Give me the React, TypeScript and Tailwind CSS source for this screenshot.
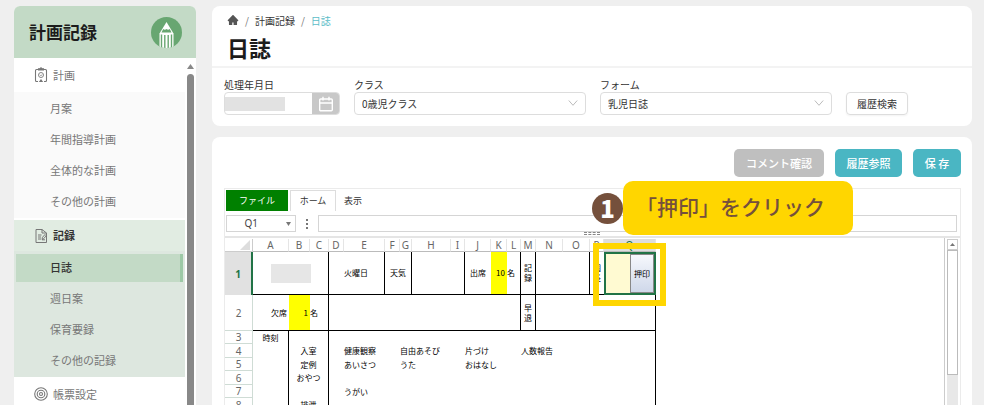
import { ReactNode } from "react";
import { AiFillHome } from "react-icons/ai";
import { clsx } from "clsx";

const PLAN_ITEMS = ["月案", "年間指導計画", "全体的な計画", "その他の計画"];
const RECORD_ITEMS = ["日誌", "週日案", "保育要録", "その他の記録"];

const COLUMNS = [
  { name: "A", width: "w-9" },
  { name: "B", width: "w-[21px]" },
  { name: "C", width: "w-[19px]" },
  { name: "D", width: "w-[15px]" },
  { name: "E", width: "w-[41px]" },
  { name: "F", width: "w-[15px]" },
  { name: "G", width: "w-3" },
  { name: "H", width: "w-[39px]" },
  { name: "I", width: "w-[14px]" },
  { name: "J", width: "w-[26px]" },
  { name: "K", width: "w-4" },
  { name: "L", width: "w-[14px]" },
  { name: "M", width: "w-[15px]" },
  { name: "N", width: "w-[27px]" },
  { name: "O", width: "w-[27px]" },
  { name: "P", width: "w-[14px]" },
  { name: "Q", width: "w-[52px]" },
];

// Rows 3 and below: time | item | four activity columns
const SCHEDULE = [
  { row: 3, time: "時刻", item: "", cells: ["", "", "", ""] },
  { row: 4, time: "", item: "入室", cells: ["健康観察", "自由あそび", "片づけ", "人数報告"] },
  { row: 5, time: "", item: "定例", cells: ["あいさつ", "うた", "おはなし", ""] },
  { row: 6, time: "", item: "おやつ", cells: ["", "", "", ""] },
  { row: 7, time: "", item: "", cells: ["うがい", "", "", ""] },
  { row: 8, time: "", item: "排泄", cells: ["", "", "", ""] },
];

function PencilLogo() {
  return (
    <svg viewBox="0 0 31 31" className="w-[31px] h-[31px]" aria-hidden="true">
      <clipPath id="logo-circle">
        <circle cx="15.5" cy="15.5" r="15.5" />
      </clipPath>
      <circle cx="15.5" cy="15.5" r="15.5" fill="#68a671" />
      <g clipPath="url(#logo-circle)">
        <path d="M15.5 5 8.500 16.500V31h14V16.500z" fill="#fff" />
        <path d="M12.200 12c1.100 1 2.200 1 3.300 0 1.100 1 2.200 1 3.300 0l1.700 3.600h-10z" fill="#68a671" />
        <path d="M10.500 17.500V31M13.800 18V31M17.200 18V31M20.500 17.500V31" stroke="#68a671" strokeWidth="1.400" />
      </g>
    </svg>
  );
}

function ClipboardIcon() {
  return (
    <svg viewBox="0 0 14 16" className="w-[14px] h-4" fill="none" stroke="#777" strokeWidth="1.100" aria-hidden="true">
      <path d="M4.500 2.500h-2a1 1 0 0 0-1 1v10a1 1 0 0 0 1 1h1.500M9.500 2.500h2a1 1 0 0 1 1 1v10a1 1 0 0 1-1 1H10" />
      <path d="M4.500 3V1.800h1.300L7 .8l1.200 1h1.300V3z" fill="#777" />
      <circle cx="7" cy="8" r="2.500" strokeWidth=".9" />
      <path d="M6 7.800l1 1 1-1.300" strokeWidth=".8" />
      <path d="M4.800 14.900 7 12l2.200 2.900z" fill="#777" stroke="none" />
    </svg>
  );
}

function RecordIcon() {
  return (
    <svg viewBox="0 0 14 16" className="w-[14px] h-4" fill="none" stroke="#777" strokeWidth="1" aria-hidden="true">
      <path d="M8 1.500H2v13h10.500V5L8 1.500V5h4.500" />
      <path d="M4 7h3.500M4 9h3M4 11h3" />
      <path d="M8 11.500l.5-2.200L11 6.500l1.300 1.300-2.800 3zM8 11.800h3" />
    </svg>
  );
}

function TargetIcon() {
  return (
    <svg viewBox="0 0 14 14" className="w-[14px] h-[14px]" fill="none" stroke="#777" strokeWidth="1.100" aria-hidden="true">
      <circle cx="7" cy="7" r="6.300" />
      <circle cx="7" cy="7" r="3.800" />
      <circle cx="7" cy="7" r="1.500" />
    </svg>
  );
}

function CalendarIcon() {
  return (
    <svg viewBox="0 0 16 16" className="w-4 h-4" fill="none" stroke="#fff" strokeWidth="1.400" aria-hidden="true">
      <rect x="1.700" y="3" width="12.600" height="11.800" rx="1" />
      <path d="M2 7h12M5 .8v3.700M11 .8v3.700" />
    </svg>
  );
}

function Sidebar() {
  return (
    <aside className="flex flex-col w-[182px] shrink-0 bg-white rounded-t-md overflow-hidden">
      <div className="flex items-center justify-between h-[52px] pl-[15px] pr-[14px] bg-[#c3dac6] shrink-0">
        <h2 className="text-[17px] font-bold text-[#1c1c1c]">計画記録</h2>
        <PencilLogo />
      </div>
      <div className="flex flex-1 min-h-0">
        <nav className="flex-1 text-[11px] text-[#777] overflow-hidden">
          <a href="#plan" className="flex items-center gap-[5px] h-[34px] pl-5">
            <ClipboardIcon />
            計画
          </a>
          <ul className="h-[126px] pt-[1px] bg-[#fafafa]">
            {PLAN_ITEMS.map((item) => (
              <li key={item}>
                <a href="#plan" className="flex items-center h-[31px] pl-9">{item}</a>
              </li>
            ))}
          </ul>
          <a href="#record" className="flex items-center gap-[5px] h-[31px] mt-[2px] pl-5 bg-[#e1ece2] font-bold text-[#333]">
            <RecordIcon />
            記録
          </a>
          <ul className="h-[126px] pt-[1px] pl-[2px] pr-[2px] bg-[#dde7df]">
            {RECORD_ITEMS.map((item, i) => (
              <li key={item} className="flex items-center h-[31px]">
                <a
                  href="#record"
                  className={clsx(
                    "flex flex-1 items-center h-7 pl-[34px]",
                    i === 0 && "bg-[#c3dac6] border-r-3 border-[#9dc9a6] font-medium text-[#333]"
                  )}
                >
                  {item}
                </a>
              </li>
            ))}
          </ul>
          <a href="#forms" className="flex items-center gap-[5px] h-[34px] pl-5">
            <TargetIcon />
            帳票設定
          </a>
        </nav>
        {/* Scrollbar */}
        <div className="flex flex-col items-center w-[11px] pt-[6px]">
          <svg viewBox="0 0 7 5" className="w-[7px] h-[5px]" aria-hidden="true">
            <path d="M3.500 0 7 5H0z" fill="#888" />
          </svg>
          <div className="flex-1 w-[7px] mt-[5px] rounded-t-full bg-[#888]" />
        </div>
      </div>
    </aside>
  );
}

function SelectField({ id, label, value }: { id: string; label: string; value: string }) {
  return (
    <div className="w-[232px]">
      <label htmlFor={id} className="block h-[14px] leading-[14px]">{label}</label>
      <div className="relative">
        <select id={id} className="block w-full h-[23px] px-[7px] bg-white border border-[#ddd] rounded appearance-none">
          <option>{value}</option>
        </select>
        <svg viewBox="0 0 10 6" className="absolute right-2 top-2 w-[10px] h-[6px] pointer-events-none" aria-hidden="true">
          <path d="M.8.5 5 5.300 9.200.5" fill="none" stroke="#bbb" />
        </svg>
      </div>
    </div>
  );
}

function PageHeader() {
  return (
    <section className="h-30 bg-white rounded-lg text-[10px] text-[#333]">
      <div className="h-[62px] pl-[15px] pt-[7px] border-b-2 border-[#f3f3f3]">
        <div className="flex items-center gap-[6px] h-[14px]">
          <AiFillHome className="w-3 h-3 text-[#555]" />
          <span className="text-[#777]">/</span>
          <a href="#record">計画記録</a>
          <span className="text-[#777]">/</span>
          <span className="text-[#5bbdc8]">日誌</span>
        </div>
        <h1 className="mt-1 text-[22px] leading-8 font-bold text-[#1c1c1c]">日誌</h1>
      </div>
      <form className="flex items-end gap-[14px] pl-3 pt-[10px]">
        <div className="w-29">
          <label htmlFor="date" className="block h-[14px] leading-[14px]">処理年月日</label>
          <div className="relative flex h-[23px] border border-[#ddd] rounded overflow-hidden">
            <input id="date" type="text" className="flex-1 min-w-0 outline-none" />
            <span className="absolute left-0 top-1 w-[60px] h-[14px] bg-[#e2e2e2]" />
            <button type="button" aria-label="カレンダー" className="flex items-center justify-center w-[27px] bg-[#c8c8c8]">
              <CalendarIcon />
            </button>
          </div>
        </div>
        <SelectField id="class" label="クラス" value="0歳児クラス" />
        <SelectField id="form" label="フォーム" value="乳児日誌" />
        <button type="button" className="h-[23px] w-[62px] border border-[#ddd] rounded shadow-xs">履歴検索</button>
      </form>
    </section>
  );
}

function Cell({ span = 1, className, children }: { span?: number; className?: string; children?: ReactNode }) {
  return (
    <td colSpan={span} className={clsx("p-0 whitespace-nowrap border-black", className)}>
      {children}
    </td>
  );
}

function RowHeader({ children }: { children: ReactNode }) {
  return (
    <th scope="row" className="p-0 border-r border-b border-[#cfdcd5] font-normal font-['Noto_Sans',sans-serif] text-[10px] text-[#666]">
      {children}
    </th>
  );
}

function Grid() {
  return (
    <table className="w-[431px] table-fixed border-separate border-spacing-0 text-[8px] leading-[12px] text-black">
      <thead>
        <tr className="h-[13px] font-['Noto_Sans',sans-serif] text-[10px] text-[#666]">
          <th className="w-7 p-0 border-r border-b border-[#ccc]">
            <svg viewBox="0 0 10 10" className="w-[10px] h-[10px] ml-auto mr-[2px]" aria-hidden="true">
              <path d="M10 0v10H0z" fill="#ddd" />
            </svg>
          </th>
          {COLUMNS.map(({ name, width }) => (
            <th
              key={name}
              scope="col"
              className={clsx(
                "p-0 font-normal border-r border-b border-r-[#e5e5e5] border-b-[#bbb]",
                width,
                name === "Q" && "bg-[#ddd] font-bold text-[#217346]"
              )}
            >
              {name}
            </th>
          ))}
        </tr>
      </thead>
      <tbody>
        <tr className="h-[43px]">
          <th scope="row" className="p-0 bg-[#e1e1e1] border-r-2 border-[#217346] font-['Noto_Sans',sans-serif] text-[10px] text-[#217346]">1</th>
          <Cell span={3} className="border-r border-b">
            <span className="block w-10 h-[19px] mx-auto bg-[#e6e6e6]" />
          </Cell>
          <Cell className="border-b" />
          <Cell className="border-r border-b">火曜日</Cell>
          <Cell span={2} className="border-r border-b text-center">天気</Cell>
          <Cell span={2} className="border-r border-b" />
          <Cell className="border-b text-center">出席</Cell>
          <Cell className="border-b bg-[#ff0] text-right pr-[2px]">10</Cell>
          <Cell className="border-r border-b">名</Cell>
          <Cell className="border-r border-b text-center leading-[10px]">記<br />録</Cell>
          <Cell span={2} className="border-r border-b" />
          <Cell className="border-b text-center leading-[10px]">園<br />長</Cell>
          <td className="relative p-0 bg-[#fffad2] border-2 border-[#217346]">
            <button
              type="button"
              className="block w-6 h-[39px] ml-auto border border-[#888] bg-linear-to-b from-[#f6f8fc] to-[#cfd8ea]"
            >
              押印
            </button>
            <span className="absolute -left-[13px] -right-3 -top-[11px] -bottom-[13px] border-6 border-[#ffd600] pointer-events-none" />
          </td>
        </tr>
        <tr className="h-9">
          <RowHeader>2</RowHeader>
          <Cell className="border-b text-right pr-[2px]">欠席</Cell>
          <Cell className="border-b bg-[#ff0] text-right pr-[2px]">1</Cell>
          <Cell className="border-r border-b">名</Cell>
          <Cell span={9} className="border-r border-b" />
          <Cell className="border-r border-b text-center leading-[10px]">早<br />退</Cell>
          <Cell span={4} className="border-r border-b" />
        </tr>
        {SCHEDULE.map(({ row, time, item, cells }) => (
          <tr key={row} className={row % 2 ? "h-[13px]" : "h-[14px]"}>
            <RowHeader>{row}</RowHeader>
            <Cell className="border-r text-center">{time}</Cell>
            <Cell span={2} className="border-r text-center">{item}</Cell>
            <Cell />
            <Cell span={2}>{cells[0]}</Cell>
            <Cell span={3}>{cells[1]}</Cell>
            <Cell span={3}>{cells[2]}</Cell>
            <Cell span={5} className="border-r">{cells[3]}</Cell>
          </tr>
        ))}
      </tbody>
    </table>
  );
}

function Callout() {
  return (
    <div className="absolute left-[367px] -top-2 flex items-center">
      <span className="flex items-center justify-center w-[31px] h-[31px] rounded-full bg-[#75503c] text-[24px] font-black text-white">
        1
      </span>
      <p className="h-[54px] w-[230px] pl-[13px] rounded-[10px] bg-[#ffd600] text-[21px] leading-[50px] font-medium text-[#75503c] whitespace-nowrap">
        「押印」をクリック
      </p>
    </div>
  );
}

function Spreadsheet() {
  return (
    <div className="relative flex flex-col flex-1 min-h-0 mt-[11px] ml-3 mr-[11px] border border-b-0 border-[#ebebeb]">
      {/* Ribbon tabs */}
      <div className="flex h-[22px] pl-[1px] pt-[1px] text-[9px] text-[#333]">
        <button type="button" className="w-[62px] h-[21px] bg-[#008000] text-white">ファイル</button>
        <button type="button" className="w-[46px] ml-[2px] border border-b-0 border-[#ddd]">ホーム</button>
        <button type="button" className="px-2">表示</button>
      </div>
      {/* Formula bar */}
      <div className="flex items-center h-[27px] pl-[1px] pr-[3px] border-b-2 border-[#e5e5e5]">
        <div className="flex items-center w-[70px] h-[17px] pr-1 border border-[#d5d5d5] font-['Noto_Sans',sans-serif] text-[10px] text-[#444]">
          <span className="flex-1 pr-[2px] text-right">Q1</span>
          <span className="flex-1 flex justify-end">
            <svg viewBox="0 0 5 4" className="w-[5px] h-1" aria-hidden="true">
              <path d="M0 0h5L2.500 4z" fill="#777" />
            </svg>
          </span>
        </div>
        <svg viewBox="0 0 2 10" className="w-[2px] h-[10px] mx-[10px]" fill="#777" aria-hidden="true">
          <path d="M0 0h2v2H0zM0 4h2v2H0zM0 8h2v2H0z" />
        </svg>
        <input type="text" aria-label="数式" className="flex-1 h-[17px] border border-[#d5d5d5] outline-none" />
      </div>
      <span className="absolute left-[359px] top-[43px] w-4 h-[3px] border-y border-dashed border-[#888]" />
      <div className="flex flex-1 min-h-0 pr-[2px]">
        <div className="flex-1 min-w-0 pt-[1px] overflow-hidden border-r border-[#ccc]">
          <Grid />
        </div>
        <div className="w-[11px] mt-[1px] ml-[2px] bg-[#e8e8e8]">
          <div className="flex items-center justify-center h-[11px] border border-[#ccc] bg-white">
            <svg viewBox="0 0 5 3" className="w-[5px] h-[3px]" aria-hidden="true">
              <path d="M2.500 0 5 3H0z" fill="#777" />
            </svg>
          </div>
          <div className="h-[125px] border border-[#bbb] bg-white" />
        </div>
      </div>
      <Callout />
    </div>
  );
}

export default function App() {
  return (
    <div className="flex gap-4 h-screen pt-[6px] pl-[14px] pr-3 bg-[#efefef] overflow-hidden font-['Noto_Sans_CJK_JP',sans-serif]">
      <Sidebar />
      <main className="flex flex-col flex-1 min-w-0 gap-[11px]">
        <PageHeader />
        <section className="flex flex-col flex-1 min-h-0 bg-white rounded-t-lg">
          <div className="flex justify-end gap-[11px] pt-3 pr-[11px] text-[11px] font-medium text-white">
            <button type="button" className="h-7 w-[90px] rounded-[5px] bg-[#bfbfbf]">コメント確認</button>
            <button type="button" className="h-7 w-[67px] rounded-[5px] bg-[#4ab6c3]">履歴参照</button>
            <button type="button" className="h-7 w-12 rounded-[5px] bg-[#4ab6c3]">保 存</button>
          </div>
          <Spreadsheet />
        </section>
      </main>
    </div>
  );
}
